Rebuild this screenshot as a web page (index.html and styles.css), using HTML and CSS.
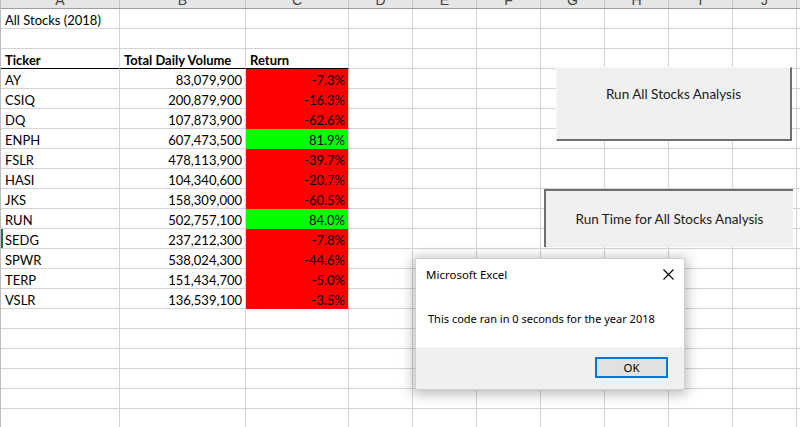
FILE: index.html
```html
<!DOCTYPE html>
<html>
<head>
<meta charset="utf-8">
<link rel="stylesheet" href="styles.css">
</head>
<body>
<div class="sheet">
  <div class="colhead">
    <div class="h"><span>A</span></div><div class="h"><span>B</span></div><div class="h"><span>C</span></div>
    <div class="h"><span>D</span></div><div class="h"><span>E</span></div><div class="h"><span>F</span></div>
    <div class="h"><span>G</span></div><div class="h"><span>H</span></div><div class="h"><span>I</span></div>
    <div class="h"><span>J</span></div><div class="h"><span>K</span></div>
  </div>
  <div class="row"><div class="c">All Stocks (2018)</div><div class="c"></div><div class="c"></div><div class="rest"></div></div>
  <div class="row"><div class="c"></div><div class="c"></div><div class="c"></div><div class="rest"></div></div>
  <div class="row head"><div class="c">Ticker</div><div class="c">Total Daily Volume</div><div class="c">Return</div><div class="rest"></div></div>
  <div class="row"><div class="c">AY</div><div class="c num">83,079,900</div><div class="c num neg">-7.3%</div><div class="rest"></div></div>
  <div class="row"><div class="c">CSIQ</div><div class="c num">200,879,900</div><div class="c num neg">-16.3%</div><div class="rest"></div></div>
  <div class="row"><div class="c">DQ</div><div class="c num">107,873,900</div><div class="c num neg">-62.6%</div><div class="rest"></div></div>
  <div class="row"><div class="c">ENPH</div><div class="c num">607,473,500</div><div class="c num pos">81.9%</div><div class="rest"></div></div>
  <div class="row"><div class="c">FSLR</div><div class="c num">478,113,900</div><div class="c num neg">-39.7%</div><div class="rest"></div></div>
  <div class="row"><div class="c">HASI</div><div class="c num">104,340,600</div><div class="c num neg">-20.7%</div><div class="rest"></div></div>
  <div class="row"><div class="c">JKS</div><div class="c num">158,309,000</div><div class="c num neg">-60.5%</div><div class="rest"></div></div>
  <div class="row"><div class="c">RUN</div><div class="c num">502,757,100</div><div class="c num pos">84.0%</div><div class="rest"></div></div>
  <div class="row"><div class="c active">SEDG</div><div class="c num">237,212,300</div><div class="c num neg">-7.8%</div><div class="rest"></div></div>
  <div class="row"><div class="c">SPWR</div><div class="c num">538,024,300</div><div class="c num neg">-44.6%</div><div class="rest"></div></div>
  <div class="row"><div class="c">TERP</div><div class="c num">151,434,700</div><div class="c num neg">-5.0%</div><div class="rest"></div></div>
  <div class="row"><div class="c">VSLR</div><div class="c num">136,539,100</div><div class="c num neg">-3.5%</div><div class="rest"></div></div>
  <div class="row"><div class="c"></div><div class="c"></div><div class="c"></div><div class="rest"></div></div>
  <div class="row"><div class="c"></div><div class="c"></div><div class="c"></div><div class="rest"></div></div>
  <div class="row"><div class="c"></div><div class="c"></div><div class="c"></div><div class="rest"></div></div>
  <div class="row"><div class="c"></div><div class="c"></div><div class="c"></div><div class="rest"></div></div>
  <div class="row"><div class="c"></div><div class="c"></div><div class="c"></div><div class="rest"></div></div>
  <div class="row"><div class="c"></div><div class="c"></div><div class="c"></div><div class="rest"></div></div>

  <div class="btn btn-run">Run All Stocks Analysis</div>
  <div class="btn btn-time">Run Time for All Stocks Analysis</div>

  <div class="dialog">
    <div class="dlg-title">
      <span>Microsoft Excel</span>
      <svg class="close" width="11" height="11" viewBox="0 0 11 11"><path d="M0.5 0.5 L10.5 10.5 M10.5 0.5 L0.5 10.5" stroke="#000" stroke-width="1.1" fill="none"/></svg>
    </div>
    <div class="dlg-body">This code ran in 0 seconds for the year 2018</div>
    <div class="dlg-foot"><div class="ok">OK</div></div>
  </div>
</div>
</body>
</html>
```
FILE: styles.css
```css
* { box-sizing: border-box; }
html, body { margin: 0; padding: 0; background: #fff; }
body { width: 800px; height: 427px; overflow: hidden; }

.sheet {
  position: relative;
  width: 800px;
  height: 427px;
  overflow: hidden;
  border-left: 1px solid #bdbdbd;
  font-family: "Lato", "Liberation Sans", sans-serif;
  font-size: 13px;
  color: #000;
}

.colhead {
  display: grid;
  grid-template-columns: 119px 126px 103px repeat(8, 64px);
  height: 9px;
  background: #e6e6e6;
  border-bottom: 1px solid #9e9e9e;
}
.h {
  display: flex;
  justify-content: center;
  align-items: flex-end;
  overflow: hidden;
  border-right: 1px solid #c4c4c4;
  color: #444;
  font-family: "Liberation Sans", sans-serif;
  font-size: 14px;
  line-height: 14px;
}
.h span { margin-bottom: 1px; }

.row {
  display: grid;
  grid-template-columns: 119px 126px 103px 1fr;
  height: 20px;
}
.c {
  display: flex;
  align-items: flex-end;
  padding: 0 4px 0 4px;
  border-right: 1px solid #d4d4d4;
  border-bottom: 1px solid #d4d4d4;
  white-space: nowrap;
  line-height: 15px;
}
.rest {
  border-bottom: 1px solid #d4d4d4;
  background: repeating-linear-gradient(to right, transparent 0 63px, #d4d4d4 63px 64px);
}
.head .c { font-weight: bold; border-bottom-color: #000; }
.num { justify-content: flex-end; padding-right: 3px; }
.neg { background: #ff0000; border-bottom-color: #ff0000; }
.pos { background: #00ff00; border-bottom-color: #00ff00; }
.active { box-shadow: inset 2px 0 #217346; }

.btn {
  position: absolute;
  background: #f0f0f0;
  color: #1a1a1a;
  font-family: "Lato", "Liberation Sans", sans-serif;
  font-size: 13.5px;
  display: flex;
  justify-content: center;
}
.btn-run {
  left: 555px;
  top: 67px;
  width: 236px;
  height: 74px;
  border-top: 1px solid #fafafa;
  border-left: 1px solid #fafafa;
  border-right: 2px solid #6e6e6e;
  border-bottom: 2px solid #6e6e6e;
  align-items: flex-start;
  padding-top: 18px;
}
.btn-time {
  left: 543px;
  top: 189px;
  width: 249px;
  height: 58px;
  border-top: 2px solid #6e6e6e;
  border-left: 2px solid #6e6e6e;
  align-items: center;
}

.dialog {
  position: absolute;
  left: 414px;
  top: 258px;
  width: 270px;
  height: 132px;
  background: #fff;
  border: 1px solid #d0d0d0;
  box-shadow: 0 2px 12px 2px rgba(0, 0, 0, 0.28);
  display: flex;
  flex-direction: column;
  font-family: "Noto Sans", "Open Sans", sans-serif;
  font-size: 11px;
  color: #000;
}
.dlg-title {
  height: 31px;
  display: flex;
  align-items: center;
  justify-content: space-between;
  padding: 0 10px 0 10px;
  font-size: 11.5px;
}
.close { display: block; }
.dlg-body {
  flex: 1;
  display: flex;
  align-items: center;
  padding-left: 12px;
}
.dlg-foot {
  height: 42px;
  background: #f0f0f0;
  display: flex;
  justify-content: flex-end;
  align-items: flex-start;
  padding: 10px 16px 0 0;
}
.ok {
  width: 73px;
  height: 21px;
  border: 2px solid #0078d7;
  background: #e1e1e1;
  display: flex;
  align-items: center;
  justify-content: center;
  line-height: 1;
  font-size: 11.5px;
}
```
